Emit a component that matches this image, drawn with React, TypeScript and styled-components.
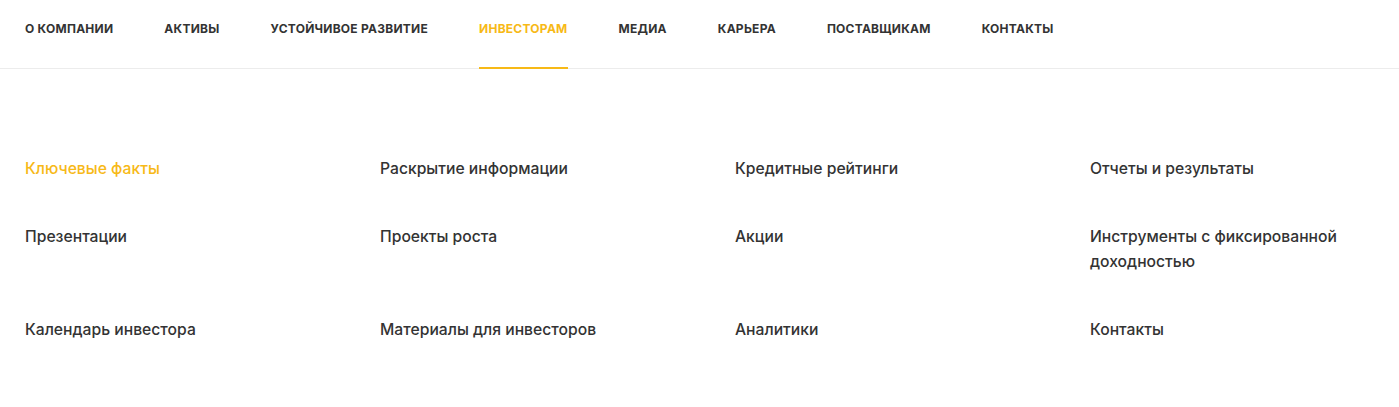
import React from 'react';
import styled, { createGlobalStyle } from 'styled-components';

const GlobalStyle = createGlobalStyle`
  body {
    margin: 0;
    background: #fff;
    font-family: Inter, "Noto Sans", sans-serif;
    color: #333;
  }
`;

const navItems = [
  'О компании',
  'Активы',
  'Устойчивое развитие',
  'Инвесторам',
  'Медиа',
  'Карьера',
  'Поставщикам',
  'Контакты',
];

const links = [
  'Ключевые факты',
  'Раскрытие информации',
  'Кредитные рейтинги',
  'Отчеты и результаты',
  'Презентации',
  'Проекты роста',
  'Акции',
  'Инструменты с фиксированной доходностью',
  'Календарь инвестора',
  'Материалы для инвесторов',
  'Аналитики',
  'Контакты',
];

export default function App() {
  return (
    <>
      <GlobalStyle />
      <Header>
        <Nav>
          {navItems.map((item) => (
            <NavItem key={item} $active={item === 'Инвесторам'}>
              {item}
            </NavItem>
          ))}
        </Nav>
      </Header>
      <Menu>
        {links.map((label, i) => (
          <MenuLink key={label} $active={i === 0}>
            {label}
          </MenuLink>
        ))}
      </Menu>
    </>
  );
}

const Header = styled.header`
  border-bottom: 1px solid #ececec;
  padding: 0 25px;
`;

const Nav = styled.nav`
  display: flex;
  gap: 51px;
  height: 68px;
`;

const NavItem = styled.a<{ $active?: boolean }>`
  display: flex;
  align-items: center;
  padding-bottom: 10px;
  box-sizing: border-box;
  font-size: 12px;
  font-weight: 700;
  text-transform: uppercase;
  letter-spacing: 0.25px;
  color: ${(p) => (p.$active ? '#f7b917' : '#333')};
  border-bottom: 2px solid ${(p) => (p.$active ? '#f7b917' : 'transparent')};
  margin-bottom: -1px;
  cursor: pointer;
`;

const Menu = styled.div`
  display: grid;
  grid-template-columns: repeat(4, 355px);
  row-gap: 43px;
  padding: 87px 25px 0;
`;

const MenuLink = styled.a<{ $active?: boolean }>`
  font-size: 15.7px;
  line-height: 25px;
  font-weight: 500;
  color: ${(p) => (p.$active ? '#f7b917' : '#333')};
  padding-right: 40px;
  cursor: pointer;
`;
